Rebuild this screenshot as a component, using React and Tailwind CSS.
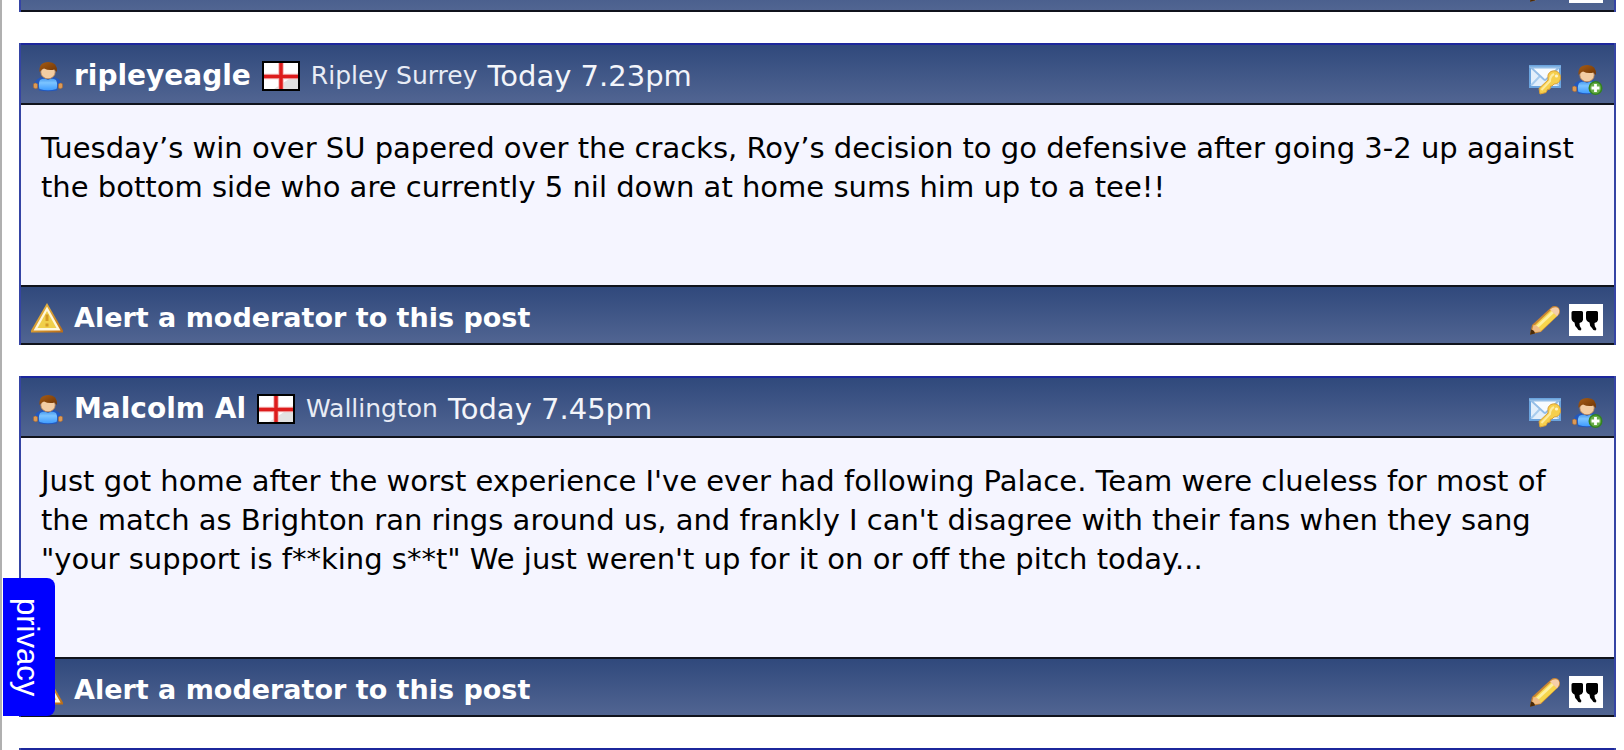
import { useId } from 'react';

const posts = [
  {
    id: 1,
    author: 'ripleyeagle',
    location: 'Ripley Surrey',
    time: 'Today 7.23pm',
    text: 'Tuesday’s win over SU papered over the cracks, Roy’s decision to go defensive after going 3-2 up against the bottom side who are currently 5 nil down at home sums him up to a tee!!',
  },
  {
    id: 2,
    author: 'Malcolm Al',
    location: 'Wallington',
    time: 'Today 7.45pm',
    text: 'Just got home after the worst experience I\'ve ever had following Palace. Team were clueless for most of the match as Brighton ran rings around us, and frankly I can\'t disagree with their fans when they sang "your support is f**king s**t" We just weren\'t up for it on or off the pitch today...',
  },
];

function UserIcon({ add = false }) {
  const id = useId();
  return (
    <svg viewBox="0 0 32 32" className="size-8 shrink-0" aria-hidden="true">
      <defs>
        <linearGradient id={`${id}b`} x1="0" y1="0" x2="0" y2="1">
          <stop offset="0" stopColor="#4a9cf0" />
          <stop offset=".35" stopColor="#7cc4ff" />
          <stop offset="1" stopColor="#3f9cff" />
        </linearGradient>
        <linearGradient id={`${id}h`} x1="0" y1="0" x2="1" y2="1">
          <stop offset="0" stopColor="#a65c14" />
          <stop offset="1" stopColor="#6f3505" />
        </linearGradient>
      </defs>
      <path d="M2 24 Q4 18 11 17 L21 17 Q28 18 30 24 L26 26 L25 30.500 Q16 32 7 30.500 L6 26Z" fill="#2358bd" />
      <path d="M1.500 24 Q3 22 5.500 24 L5.500 28 Q3 29.500 1.500 27.500Z" fill="#dd9a55" stroke="#a8682f" strokeWidth=".6" />
      {!add && <path d="M26.500 24 Q29 22 30.500 24 L30.500 27.500 Q29 29.500 26.500 28Z" fill="#dd9a55" stroke="#a8682f" strokeWidth=".6" />}
      <path d="M8 20 Q12 17.500 16 20 Q20 17.500 24 20 Q26 24 24.500 29 Q16 31.500 7.500 29 Q6 24 8 20Z" fill={`url(#${id}b)`} />
      <ellipse cx="16" cy="12" rx="7.200" ry="6.800" fill="#f3cda3" stroke="#bd8453" strokeWidth=".8" />
      <path d="M7.500 12 Q6.500 2 16.500 2 Q25.500 2 25 12 L22.500 9.500 Q17 11 12 8.500 Q9.500 9 7.500 12Z" fill={`url(#${id}h)`} />
      {add && (
        <>
          <circle cx="24.500" cy="25" r="7" fill="#33831f" />
          <circle cx="24.500" cy="25" r="5.500" fill="#68ad48" />
          <path d="M24.500 21v8M20.500 25h8" stroke="#fff" strokeWidth="2.800" />
        </>
      )}
    </svg>
  );
}

function MailKeyIcon() {
  return (
    <svg viewBox="0 0 32 32" className="size-8 shrink-0" aria-hidden="true">
      <rect x="1" y="3" width="30" height="21" fill="#e3effb" stroke="#6ba4de" strokeWidth="2" />
      <path d="M2 22.500 L12 12 M30 22.500 L20 12" stroke="#a8ccee" strokeWidth="2" />
      <path d="M2 4.500 L15 16.500 Q16 17.500 17 16.500 L30 4.500Z" fill="#f7fbff" stroke="#94bde6" strokeWidth="1.800" />
      <path d="M19 12 Q21 7 27 8 Q32 10 31.500 16 Q30 21 25 21 L23 23 L21.500 23 L21 26 L18.500 26.500 L17 29.500 L11 31 L10 25.500 L19 17Z" fill="#f6cf4d" stroke="#dca136" strokeWidth="1" />
      <path d="M12.500 27 L21 18 Q21 13 25 11" fill="none" stroke="#fdeb9e" strokeWidth="2" />
      <circle cx="27.500" cy="13" r="1.600" fill="#fff3c6" />
    </svg>
  );
}

function AlertIcon() {
  const id = useId();
  return (
    <svg viewBox="0 0 32 32" className="size-8 shrink-0" aria-hidden="true">
      <linearGradient id={id} x1="0" y1="0" x2="1" y2="1">
        <stop offset="0" stopColor="#f2c94c" />
        <stop offset="1" stopColor="#b96a16" />
      </linearGradient>
      <path d="M16 1 L32 28.500 L32 30.500 L0 30.500 L0 28.500Z" fill={`url(#${id})`} />
      <path d="M16 4.500 L29.500 28.500 L2.500 28.500Z" fill="#fff8dc" />
      <path d="M16 9 L25.500 26 L6.500 26Z" fill="#f0cf4b" />
      <path d="M16 12.500v6.500M16 21.500v3" stroke="#d39a26" strokeWidth="3" />
    </svg>
  );
}

function PencilIcon() {
  return (
    <svg viewBox="0 0 32 32" className="size-8 shrink-0" aria-hidden="true">
      <path d="M1 30.500 L3 21 L22 3.500 Q25 1 29 3 Q32 6 30.500 10 L12 28Z" fill="#c98532" />
      <path d="M5 22 L22 6 L28 12 L12 27Z" fill="#f7d64c" />
      <path d="M7 22 L23 7 L25 9 L9 24Z" fill="#fdf0a0" />
      <path d="M21 5.500 Q26 1.500 29.500 4.500 Q31.500 8 28 12.500Z" fill="#f6cfa8" />
      <path d="M2.500 28.500 L4.500 21 Q10.500 21.500 12 27.500Z" fill="#f0bd86" />
      <path d="M1 30.800 L2 25.500 Q5.500 26 6 29.500Z" fill="#4a2a08" />
    </svg>
  );
}

function QuoteIcon() {
  return (
    <svg viewBox="0 0 34 32" className="h-8 w-[34px] shrink-0 bg-white" aria-hidden="true">
      <path d="M4 7 H12.500 Q14 7 14 8.500 V16 Q13.500 18.500 10.500 19 Q10 21.500 12.500 25 L11.500 26.500 Q9 26.500 8 24 Q5.500 22 5.500 18.500 Q2.500 17 2.500 14 V8.500 Q2.500 7 4 7Z" />
      <path d="M18.500 7 H27.500 Q29 7 29 8.500 V16 Q28.500 18.500 25.500 19 Q25 21.500 27.500 25 L26.500 26.500 Q24 26.500 23 24 Q20.500 22 20.500 18.500 Q17 17 17 14 V8.500 Q17 7 18.500 7Z" />
    </svg>
  );
}

function EnglandFlag() {
  return (
    <svg viewBox="0 0 38 30" className="h-[30px] w-[38px] shrink-0" role="img" aria-label="England">
      <rect x="1" y="1" width="36" height="28" fill="#fff" stroke="#000" strokeWidth="2" />
      <path d="M36 12 V28 H12Z" fill="#e2e2e2" />
      <path d="M19 2v26M2 15.500h34" stroke="#f3b9b9" strokeWidth="5.500" />
      <path d="M19 2v26M2 15.500h34" stroke="#dd1c1c" strokeWidth="3.500" />
    </svg>
  );
}

function PostHeader({ author, location, time }) {
  return (
    <header className="flex h-[62px] items-center justify-between border-t-2 border-b-2 border-t-[#1c279c] border-b-[#10131c] bg-linear-to-b from-[#30497c] to-[#516592] pt-1 pr-[11px] pl-[11px] text-white">
      <div className="flex items-center">
        <UserIcon />
        <a href="#profile" className="ml-[10px] font-bold">{author}</a>
        <span className="mx-[11px]"><EnglandFlag /></span>
        <span className="text-[25px] text-[#e8ecf5]">{location}</span>
        <span className="ml-[10px] text-[29px] text-[#f3f5fa]">{time}</span>
      </div>
      <div className="flex gap-[10px] pt-1.5">
        <button type="button" aria-label="Send private message"><MailKeyIcon /></button>
        <button type="button" aria-label="Add as friend"><UserIcon add /></button>
      </div>
    </header>
  );
}

function PostFooter() {
  return (
    <footer className="flex h-[60px] shrink-0 items-center justify-between border-y-2 border-[#10131c] bg-linear-to-b from-[#30497c] to-[#516592] pt-1.5 pr-[11px] pl-[10px] text-white">
      <a href="#alert" className="flex items-center gap-[11px] text-[27px] font-bold">
        <AlertIcon />
        Alert a moderator to this post
      </a>
      <div className="flex gap-2 pt-1">
        <button type="button" aria-label="Edit"><PencilIcon /></button>
        <button type="button" aria-label="Quote"><QuoteIcon /></button>
      </div>
    </footer>
  );
}

function Post({ post }) {
  return (
    <article className="border-x-2 border-[#3544a4] bg-[#f5f5ff]">
      <PostHeader {...post} />
      <p className="px-5 pt-6 pb-[78px] text-[29px] leading-[39px] text-black">{post.text}</p>
      <PostFooter />
    </article>
  );
}

export default function App() {
  return (
    <div className="h-screen overflow-hidden border-l-2 border-[#b0b0b0] bg-white font-['DejaVu_Sans',Verdana,sans-serif] text-[28px] leading-9">
      <main className="flex flex-col gap-[31px] pr-2 pl-[17px]">
        {/* tail of the previous post */}
        <div className="flex h-3 flex-col justify-end overflow-hidden border-x-2 border-[#3544a4]">
          <PostFooter />
        </div>
        {posts.map((post) => <Post key={post.id} post={post} />)}
        <div className="border-x-2 border-[#3544a4]">
          <PostHeader author="" location="" time="" />
        </div>
      </main>
      <button
        type="button"
        className="fixed bottom-[34px] left-[3px] flex h-[138px] w-[52px] items-center justify-center rounded-r-lg bg-[#0000ff] pr-1 font-['Liberation_Sans',Arial,sans-serif] text-[31px] text-white [writing-mode:vertical-rl]"
      >
        privacy
      </button>
    </div>
  );
}
